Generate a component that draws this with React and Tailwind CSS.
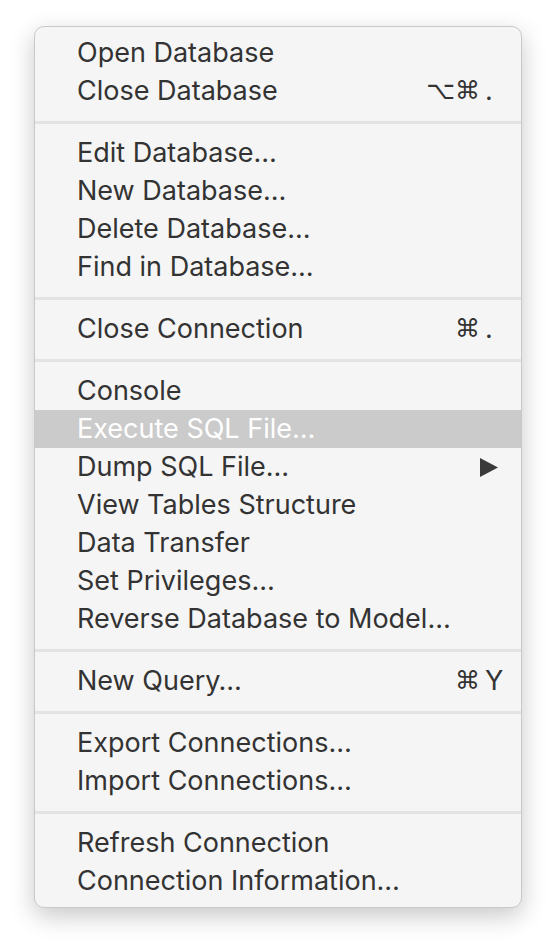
import React from 'react';

const sections = [
    [
        { label: 'Open Database' },
        { label: 'Close Database', mods: '⌥⌘', key: '.' },
    ],
    [
        { label: 'Edit Database…' },
        { label: 'New Database…' },
        { label: 'Delete Database…' },
        { label: 'Find in Database…' },
    ],
    [{ label: 'Close Connection', mods: '⌘', key: '.' }],
    [
        { label: 'Console' },
        { label: 'Execute SQL File…', active: true },
        { label: 'Dump SQL File…', submenu: true },
        { label: 'View Tables Structure' },
        { label: 'Data Transfer' },
        { label: 'Set Privileges…' },
        { label: 'Reverse Database to Model…' },
    ],
    [{ label: 'New Query…', mods: '⌘', key: 'Y' }],
    [
        { label: 'Export Connections…' },
        { label: 'Import Connections…' },
    ],
    [
        { label: 'Refresh Connection' },
        { label: 'Connection Information…' },
    ],
];

const MenuItem = ({ item }) => (
    <div
        className={`flex items-center h-[38px] pl-[42px] ${item.active ? 'bg-[#cbcbcb] text-white' : 'text-[#333333]'}`}
    >
        <span className="flex-1 whitespace-nowrap">{item.label}</span>
        <div className="flex items-center w-[102px] h-full">
            {item.mods && (
                <>
                    <span className="w-[61px] text-right font-['DejaVu_Sans',sans-serif] text-[25px]">{item.mods}</span>
                    <span className="ml-[5px]">{item.key}</span>
                </>
            )}
            {item.submenu && (
                <>
                    <span className="w-[61px]" />
                    <svg width="18" height="19" viewBox="0 0 18 19">
                        <path d="M0 0 L18 9.5 L0 19 Z" fill="#3a3a3a" />
                    </svg>
                </>
            )}
        </div>
    </div>
);

const App = () => {
    return (
        <div className="min-h-[950px] bg-white pt-[26px] pl-[34px] font-['Inter',sans-serif] text-[27px]">
            <div className="w-[488px] rounded-[10px] bg-[#f5f5f5] border border-[#c9c9c9] py-[7px] overflow-hidden shadow-[0_8px_24px_rgba(0,0,0,0.22)]">
                {sections.map((items, i) => (
                    <div key={i}>
                        {i > 0 && (
                            <div className="h-[24px] flex items-center">
                                <div className="w-full h-[3px] bg-[#e3e3e3]" />
                            </div>
                        )}
                        {items.map((item) => (
                            <MenuItem key={item.label} item={item} />
                        ))}
                    </div>
                ))}
            </div>
        </div>
    );
};

export default App;
